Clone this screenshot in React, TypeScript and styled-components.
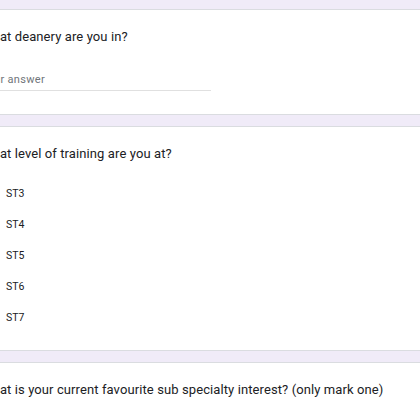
import React from "react";
import styled, { createGlobalStyle } from "styled-components";

const Global = createGlobalStyle`
  html, body { margin: 0; padding: 0; background: #f0ebf8; overflow: hidden; }
  body { width: 420px; height: 420px; }
`;

const Page = styled.div`
  margin-left: -44px;
  width: 560px;
  padding-top: 9px;
  display: flex;
  flex-direction: column;
  gap: 11px;
`;

const Card = styled.section<{ $h: number }>`
  background: #fff;
  border: 1px solid #dadce0;
  border-radius: 8px;
  padding: 17px 24px 0 24px;
  height: ${(p) => p.$h}px;
  box-sizing: border-box;
`;

const Question = styled.div`
  font-family: "Roboto", "Liberation Sans", sans-serif;
  font-size: 13px;
  line-height: 20px;
  color: #202124;
  letter-spacing: 0.1px;
`;

const Input = styled.div`
  margin-top: 25px;
  width: 230px;
  border-bottom: 1px solid #e0e0e0;
  padding-bottom: 2px;
  font-family: "Roboto", "Liberation Sans", sans-serif;
  font-size: 11px;
  line-height: 16px;
  color: #70757a;
  letter-spacing: 0.3px;
`;

const Options = styled.div`
  margin-top: 14px;
  display: flex;
  flex-direction: column;
`;

const Option = styled.label`
  display: flex;
  align-items: center;
  gap: 5px;
  height: 31px;
  font-family: "Roboto", "Liberation Sans", sans-serif;
  font-size: 10.5px;
  color: #202124;
`;

const Radio = styled.span`
  width: 16px;
  height: 16px;
  margin: 0 4px 0 0;
  border: 2px solid #5f6368;
  border-radius: 50%;
  box-sizing: border-box;
  flex: none;
`;

const levels = ["ST3", "ST4", "ST5", "ST6", "ST7"];

export default function App() {
  return (
    <>
      <Global />
      <Page>
        <Card $h={106}>
          <Question>What deanery are you in?</Question>
          <Input>Your answer</Input>
        </Card>
        <Card $h={225}>
          <Question>What level of training are you at?</Question>
          <Options>
            {levels.map((l) => (
              <Option key={l}>
                <Radio />
                {l}
              </Option>
            ))}
          </Options>
        </Card>
        <Card $h={120}>
          <Question>What is your current favourite sub specialty interest? (only mark one)</Question>
        </Card>
      </Page>
    </>
  );
}
